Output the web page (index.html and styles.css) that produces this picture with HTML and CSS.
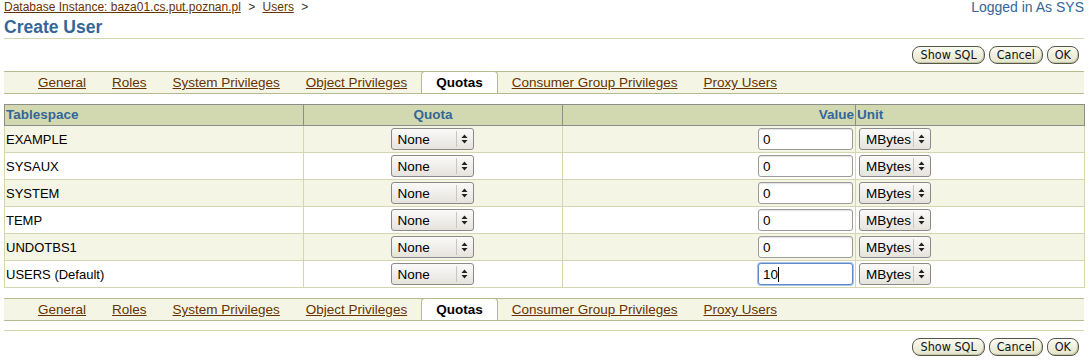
FILE: index.html
```html
<!DOCTYPE html>
<html lang="en">
<head>
  <meta charset="UTF-8"/>
  <title>Create User</title>
  <link rel="stylesheet" href="styles.css">
</head>
<body>
  <div class="page">
    <div class="topbar">
      <div class="crumbs">
        <a href="#">Database Instance: baza01.cs.put.poznan.pl</a>
        <span class="sep">&gt;</span>
        <a href="#">Users</a>
        <span class="sep">&gt;</span>
      </div>
      <div class="login">Logged in As SYS</div>
    </div>

    <h1>Create User</h1>

    <div class="actions">
      <button class="btn">Show SQL</button>
      <button class="btn">Cancel</button>
      <button class="btn">OK</button>
    </div>

    <div class="tabs">
      <a class="tab" href="#">General</a>
      <a class="tab" href="#">Roles</a>
      <a class="tab" href="#">System Privileges</a>
      <a class="tab" href="#">Object Privileges</a>
      <span class="tab active">Quotas</span>
      <a class="tab" href="#">Consumer Group Privileges</a>
      <a class="tab" href="#">Proxy Users</a>
    </div>

    <table class="quotas">
      <colgroup>
        <col class="c-ts"><col class="c-quota"><col class="c-value"><col class="c-unit">
      </colgroup>
      <thead>
        <tr>
          <th class="left">Tablespace</th>
          <th class="center">Quota</th>
          <th class="right">Value</th>
          <th class="left">Unit</th>
        </tr>
      </thead>
      <tbody id="rows"></tbody>
    </table>

    <div class="tabs lower">
      <a class="tab" href="#">General</a>
      <a class="tab" href="#">Roles</a>
      <a class="tab" href="#">System Privileges</a>
      <a class="tab" href="#">Object Privileges</a>
      <span class="tab active">Quotas</span>
      <a class="tab" href="#">Consumer Group Privileges</a>
      <a class="tab" href="#">Proxy Users</a>
    </div>

    <div class="rule"></div>

    <div class="actions">
      <button class="btn">Show SQL</button>
      <button class="btn">Cancel</button>
      <button class="btn">OK</button>
    </div>
  </div>

  <script>
    (function() {
      const data = [
        ['EXAMPLE', '0'],
        ['SYSAUX', '0'],
        ['SYSTEM', '0'],
        ['TEMP', '0'],
        ['UNDOTBS1', '0'],
        ['USERS (Default)', '10', true]
      ];
      const arrows = '<svg class="arr" width="7" height="10" viewBox="0 0 7 10">' +
        '<path d="M3.5 0.5 L6.5 4 L0.5 4 Z M0.5 6 L6.5 6 L3.5 9.5 Z" fill="#222"/></svg>';
      const sel = (txt, cls) =>
        `<span class="select ${cls}"><span class="sel-text">${txt}</span><span class="sel-btn">${arrows}</span></span>`;

      const tbody = document.getElementById('rows');
      tbody.innerHTML = data.map(([name, val, focus]) => `
        <tr>
          <td>${name}</td>
          <td class="center">${sel('None', 'sel-quota')}</td>
          <td class="right"><span class="input${focus ? ' focus' : ''}">${val}${focus ? '<span class="caret"></span>' : ''}</span></td>
          <td>${sel('MBytes', 'sel-unit')}</td>
        </tr>`).join('');
    })();
  </script>
</body>
</html>
```

FILE: styles.css
```css
:root {
  --link: #663300;
  --blue: #336699;
  --olive-line: #d4d6b0;
  --tab-line: #b7ba8e;
  --tab-bg: #f5f5e6;
  --head-bg: #d2d9b1;
  --row-alt: #f5f5e6;
  --head-border: #8e8e88;
}

* { box-sizing: border-box; }

body {
  margin: 0;
  font-family: "Liberation Sans", Arial, sans-serif;
  font-size: 13px;
  color: #000;
  background: #fff;
}

.page {
  padding: 0 4px;
}

a { color: var(--link); }

.topbar {
  display: flex;
  justify-content: space-between;
  align-items: flex-start;
  height: 16px;
}

.crumbs {
  font-size: 12px;
  line-height: 14px;
}
.crumbs .sep { margin: 0 4px; color: #333; }

.login {
  color: var(--blue);
  font-size: 14px;
  line-height: 14px;
}

h1 {
  margin: 2px 0 0;
  font-size: 17.5px;
  line-height: 19px;
  color: var(--blue);
  font-weight: bold;
  padding-bottom: 1px;
  border-bottom: 1px solid var(--olive-line);
}

.actions {
  display: flex;
  justify-content: flex-end;
  gap: 4px;
  padding: 7px 5px 0 0;
  height: 25px;
}

.btn {
  font-family: "DejaVu Sans Condensed", "DejaVu Sans", sans-serif;
  font-stretch: condensed;
  font-size: 12.5px;
  height: 18px;
  padding: 0 7px;
  line-height: 16px;
  border: 1px solid #55554a;
  border-radius: 8px;
  background: linear-gradient(#fbfbf2, #e4e4cc);
  box-shadow: inset -1px -1px 0 #c6c6a8;
  color: #111;
  cursor: pointer;
}

.tabs {
  display: flex;
  align-items: stretch;
  margin-top: 7px;
  height: 23px;
  padding-left: 21px;
  background: var(--tab-bg);
  border-top: 1px solid var(--tab-line);
  border-bottom: 1px solid var(--tab-line);
}
.tabs.lower { margin-top: 10px; }

.tab {
  padding: 0 13px;
  line-height: 21px;
  font-size: 13.5px;
  white-space: nowrap;
}

.tab.active {
  background: #fff;
  font-weight: bold;
  color: #000;
  border-left: 1px solid var(--tab-line);
  border-right: 1px solid var(--tab-line);
  border-top: 1px solid var(--tab-line);
  border-radius: 4px 4px 0 0;
  margin-top: -1px;
  padding: 0 14px 0 14px;
  margin-left: 1px;
  margin-right: 1px;
}

.quotas {
  margin-top: 10px;
  width: 100%;
  border-collapse: collapse;
  table-layout: fixed;
}

.c-ts { width: 299px; }
.c-quota { width: 259px; }
.c-value { width: 293px; }
.c-unit { width: 229px; }

.quotas th {
  background: var(--head-bg);
  color: var(--blue);
  font-weight: bold;
  font-size: 13.5px;
  height: 21px;
  padding: 0 1px;
  line-height: 16px;
  border: 1px solid var(--head-border);
}

.quotas td {
  border: 1px solid var(--olive-line);
  height: 27px;
  padding: 0 1px;
  font-size: 13px;
}

.quotas tbody tr:nth-child(odd) td { background: var(--row-alt); }

.left { text-align: left; }
.center { text-align: center; }
.right { text-align: right; }

.select {
  display: inline-flex;
  align-items: center;
  height: 22px;
  border: 1px solid #8c8a86;
  border-radius: 3px;
  background: linear-gradient(#fbfaf9, #e6e3de);
  vertical-align: middle;
  text-align: left;
}
.sel-text {
  flex: 1;
  padding-left: 6px;
  font-size: 13.5px;
}
.sel-btn {
  display: flex;
  align-items: center;
  justify-content: center;
  height: 16px;
  width: 16px;
  border-left: 1px solid #c9c6c0;
  margin-right: 1px;
}
.sel-quota { width: 83px; margin-right: 2px; }
.sel-unit { width: 72px; margin-left: 2px; }

.input {
  display: inline-flex;
  align-items: center;
  width: 95px;
  height: 22px;
  padding-left: 4px;
  border: 1px solid #9d9b97;
  border-radius: 3px;
  background: #fff;
  box-shadow: inset 0 1px 1px rgba(0,0,0,0.12);
  text-align: left;
  vertical-align: middle;
  font-size: 13.5px;
  margin-right: 1px;
}
.input.focus {
  border-color: #5d8ac7;
  box-shadow: 0 0 0 1px #a9c3e6;
}
.caret {
  display: inline-block;
  width: 1px;
  height: 15px;
  background: #000;
}

.rule {
  margin-top: 9px;
  border-top: 1px solid var(--olive-line);
}
```
